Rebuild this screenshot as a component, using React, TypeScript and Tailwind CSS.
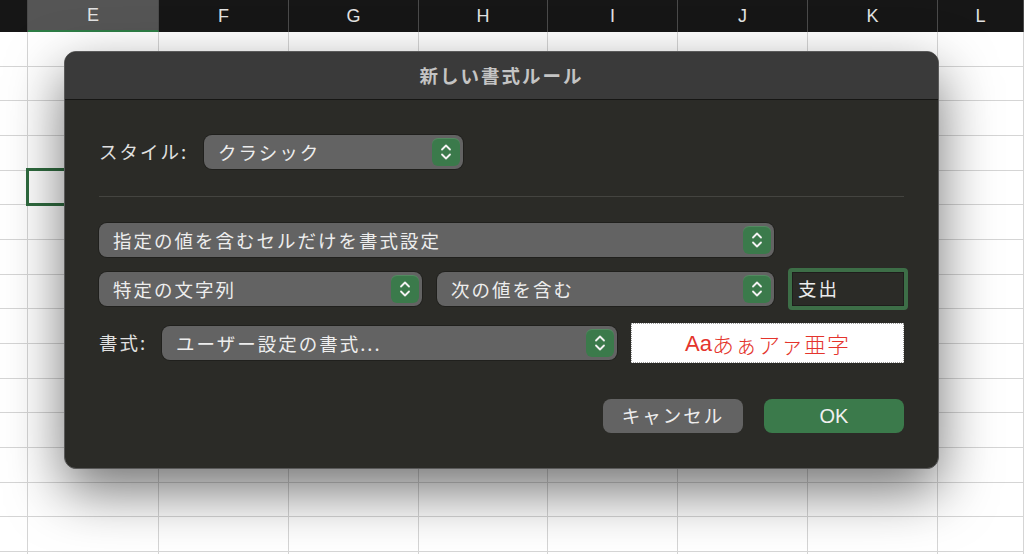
import React from "react";

const COLS = [
  { w: 28, label: "" },
  { w: 131, label: "E" },
  { w: 130, label: "F" },
  { w: 130, label: "G" },
  { w: 129, label: "H" },
  { w: 130, label: "I" },
  { w: 130, label: "J" },
  { w: 130, label: "K" },
  { w: 86, label: "L" },
];

const JP = { fontFamily: '"Noto Sans CJK JP", "Noto Sans", sans-serif' };

function Stepper() {
  return (
    <div className="flex h-[28px] w-[28px] shrink-0 items-center justify-center rounded-[6px] bg-[#3b7a4b] shadow-[inset_0_1px_0_rgba(255,255,255,0.12)]">
      <svg width="14" height="20" viewBox="0 0 14 20" fill="none">
        <path d="M3 7.5 L7 3.5 L11 7.5" stroke="#f2f2f2" strokeWidth="1.8" strokeLinecap="round" strokeLinejoin="round" />
        <path d="M3 12.5 L7 16.5 L11 12.5" stroke="#f2f2f2" strokeWidth="1.8" strokeLinecap="round" strokeLinejoin="round" />
      </svg>
    </div>
  );
}

function Select({ text, className }: { text: string; className: string }) {
  return (
    <div
      className={`flex h-[34px] shrink-0 items-center justify-between rounded-[8px] bg-[#636363] pl-[14px] pr-[3px] text-[18.5px] font-normal tracking-[2px] text-[#ededed] shadow-[0_0_0_1px_rgba(0,0,0,0.25)] ${className}`}
      style={JP}
    >
      <span className="leading-none">{text}</span>
      <Stepper />
    </div>
  );
}

export default function App() {
  const rows = Array.from({ length: 16 });
  return (
    <div className="relative h-[554px] w-[1024px] overflow-hidden bg-white">
      {/* header */}
      <div className="flex h-[32px] bg-[#161616]">
        {COLS.map((c, i) => (
          <div
            key={i}
            style={{ width: c.w, fontFamily: '"Liberation Sans", Arial, sans-serif' }}
            className={`flex shrink-0 items-center justify-center border-r border-[#4a4a4a] text-[18px] text-[#e2e2e2] ${
              c.label === "E" ? "border-b-2 border-b-[#2e7d46] bg-[#555555]" : ""
            }`}
          >
            {c.label}
          </div>
        ))}
      </div>
      {/* grid */}
      <div className="flex flex-col">
        {rows.map((_, r) => (
          <div key={r} className="flex h-[34.67px] shrink-0">
            {COLS.map((c, i) => (
              <div key={i} style={{ width: c.w }} className="shrink-0 border-b border-r border-[#d5d5d5] bg-white" />
            ))}
          </div>
        ))}
      </div>
      {/* selected cell */}
      <div className="absolute left-[26px] top-[168px] h-[38px] w-[140px] border-[3px] border-[#2f6b3f]" />

      {/* dialog */}
      <div className="absolute left-[64px] top-[51px] flex h-[418px] w-[875px] flex-col overflow-hidden rounded-[12px] border border-[#5a5a5a] bg-[#2b2b27] shadow-[0_22px_55px_rgba(0,0,0,0.55)]">
        <div
          className="flex h-[48px] shrink-0 items-center justify-center border-b border-[#161614] bg-[#3a3a3a] text-[18.5px] font-bold tracking-[2px] text-[#c4c4c4]"
          style={JP}
        >
          新しい書式ルール
        </div>
        <div className="flex flex-col pl-[34px]">
          <div className="mt-[35px] flex items-center">
            <span className="w-[105px] shrink-0 text-[18.5px] tracking-[2px] text-[#e0e0e0]" style={JP}>
              スタイル:
            </span>
            <Select text="クラシック" className="w-[259px]" />
          </div>
          <div className="mt-[27px] h-px w-[805px] bg-[#444440]" />
          <Select text="指定の値を含むセルだけを書式設定" className="mt-[26px] w-[675px]" />
          <div className="mt-[11px] flex items-center">
            <Select text="特定の文字列" className="w-[323px]" />
            <Select text="次の値を含む" className="ml-[15px] w-[337px]" />
            <div className="ml-[14px] flex h-[42px] w-[120px] shrink-0 rounded-[4px] border-[4px] border-[#3d6e47] bg-[#2b2b27]">
              <div
                className="flex flex-1 items-center border border-[#1e1e1c] pl-[5px] text-[18.5px] tracking-[2px] text-[#ededed]"
                style={JP}
              >
                支出
              </div>
            </div>
          </div>
          <div className="mt-[13px] flex items-center">
            <span className="w-[63px] shrink-0 text-[18.5px] tracking-[2px] text-[#e0e0e0]" style={JP}>
              書式:
            </span>
            <Select text="ユーザー設定の書式..." className="w-[455px]" />
            <div className="ml-[14px] flex h-[40px] w-[273px] shrink-0 items-center justify-center border border-dotted border-[#9a9a9a] bg-white text-[22px] text-[#e4342c]">
              <span style={{ fontFamily: '"Liberation Sans", Arial, sans-serif' }}>Aa</span>
              <span className="font-light tracking-[1px]" style={JP}>
                あぁアァ亜字
              </span>
            </div>
          </div>
          <div className="mt-[36px] flex w-[805px] justify-end gap-[21px]">
            <div
              className="flex h-[34px] w-[140px] items-center justify-center rounded-[8px] bg-[#636363] text-[18.5px] tracking-[2px] text-[#ededed]"
              style={JP}
            >
              キャンセル
            </div>
            <div
              className="flex h-[34px] w-[140px] items-center justify-center rounded-[8px] bg-[#3b7a4b] text-[20px] text-[#f0f0f0]"
              style={{ fontFamily: '"Liberation Sans", Arial, sans-serif' }}
            >
              OK
            </div>
          </div>
        </div>
      </div>
    </div>
  );
}
